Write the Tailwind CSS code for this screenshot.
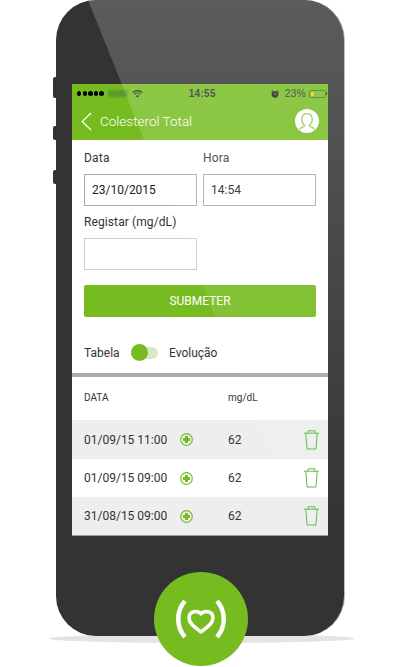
<!doctype html>
<html>
<head>
    <meta charset="UTF-8">
    <meta name="viewport" content="width=device-width, initial-scale=1.0">
    <script src="https://cdn.jsdelivr.net/npm/@tailwindcss/browser@4"></script>
</head>
<body class="bg-white font-['Roboto',sans-serif]">

<div class="relative w-[400px] h-[667px] overflow-hidden">
    <!-- shadow under the phone -->
    <div class="absolute left-[49px] top-[634px] w-[306px] h-[9px] rounded-[50%] bg-[#e4e4e4]"></div>

    <!-- phone -->
    <div class="relative ml-[56px] w-[288px] h-[636px] rounded-[40px] bg-[#333333] shadow-[1px_0_0_0_#bbbbbb] overflow-hidden pt-[84px] pl-[16px]">
        <div class="w-[256px] h-[452px] bg-white flex flex-col">

            <!-- green header -->
            <div class="h-[56px] bg-[#76bc21] flex flex-col shrink-0">
                <div class="h-[17px] mt-[1px] flex items-center text-[#333333] font-['Liberation_Sans',sans-serif] relative">
                    <div class="flex gap-[1.2px] ml-[5px]">
                        <span class="w-[4.4px] h-[4.4px] rounded-full bg-black"></span>
                        <span class="w-[4.4px] h-[4.4px] rounded-full bg-black"></span>
                        <span class="w-[4.4px] h-[4.4px] rounded-full bg-black"></span>
                        <span class="w-[4.4px] h-[4.4px] rounded-full bg-black"></span>
                        <span class="w-[4.4px] h-[4.4px] rounded-full bg-black"></span>
                    </div>
                    <div class="ml-[4px] w-[20px] h-[7px] bg-[#5e9a2a] blur-[1px]"></div>
                    <svg class="ml-[4px]" width="11" height="8" viewBox="0 0 11 8" fill="none" stroke="#222" stroke-width="1.1">
                        <path d="M.6 2.6a7 7 0 0 1 9.8 0"/>
                        <path d="M2.3 4.3a4.6 4.6 0 0 1 6.4 0"/>
                        <path d="M3.9 5.9a2.3 2.3 0 0 1 3.2 0L5.5 7.6z" fill="#222" stroke="none"/>
                    </svg>
                    <span class="ml-[46px] text-[10px] font-bold tracking-[.3px]">14:55</span>
                    <svg class="ml-[55px]" width="8" height="8" viewBox="0 0 8 8">
                        <circle cx="4" cy="4.3" r="3.4" fill="#222"/>
                        <path d="M.4 2 2 .5M7.6 2 6 .5" stroke="#222" stroke-width="1"/>
                        <path d="M4 2.5v2h1.4" stroke="#8dc94a" stroke-width=".7" fill="none"/>
                    </svg>
                    <span class="ml-[6px] text-[10.5px]">23%</span>
                    <div class="ml-[3px] w-[17px] h-[8px] rounded-[1.5px] border border-[#4d7a25] p-[1px] flex">
                        <div class="w-[3px] bg-[#f5c518]"></div>
                    </div>
                    <div class="w-[1.5px] h-[3px] bg-[#333333]"></div>
                </div>
                <div class="flex-1 flex items-center pl-[9px] pr-[9px]">
                    <svg width="11" height="19" viewBox="0 0 11 19" fill="none" stroke="#fff" stroke-width="1.2">
                        <path d="M10 1 1.200 9.500 10 18"/>
                    </svg>
                    <span class="ml-[8px] text-white text-[13.500px] font-light">Colesterol Total</span>
                    <svg class="ml-auto" width="24" height="24" viewBox="0 0 24 24">
                        <circle cx="12" cy="12" r="12" fill="#fff"/>
                        <path d="M4.500 20c1.500-2 4.600-2 5.300-3.600-2.100-1.600-3.100-4-3-6.400C7 7 9 4.700 12 4.700S17 7 17.200 10c.1 2.400-.9 4.800-3 6.400.7 1.600 3.800 1.600 5.300 3.600" fill="none" stroke="#8dc94a" stroke-width="1.300"/>
                    </svg>
                </div>
            </div>

            <!-- form -->
            <div class="px-[12px] pt-[11px] shrink-0">
                <div class="grid grid-cols-[113px_113px] gap-x-[6px]">
                    <div>
                        <div class="text-[12px] leading-[14px] text-[#333333] tracking-[.2px]">Data</div>
                        <div class="mt-[9px] h-[32px] border border-[#aaaaaa] pl-[7px] flex items-center text-[12px] text-[#222222]">23/10/2015</div>
                    </div>
                    <div>
                        <div class="text-[12px] leading-[14px] text-[#333333] tracking-[.2px]">Hora</div>
                        <div class="mt-[9px] h-[32px] border border-[#aaaaaa] pl-[7px] flex items-center text-[12px] text-[#222222]">14:54</div>
                    </div>
                </div>
                <div class="mt-[9px] text-[12px] leading-[14px] text-[#333333] tracking-[.1px]">Registar (mg/dL)</div>
                <div class="mt-[9px] w-[113px] h-[32px] border border-[#cccccc]"></div>
                <div class="mt-[15px] h-[32px] rounded-[2px] bg-[#76bc21] flex items-center justify-center text-white text-[12px]">SUBMETER</div>
                <div class="mt-[27px] h-[18px] flex items-center text-[12px] text-[#333333]">
                    <span class="w-[36px]">Tabela</span>
                    <div class="relative ml-[11px] w-[27px] h-[12px] rounded-full bg-[#d6ebbf]">
                        <div class="absolute left-0 top-[-3px] w-[17px] h-[17px] rounded-full bg-[#76bc21]"></div>
                    </div>
                    <span class="ml-[11px]">Evolução</span>
                </div>
            </div>

            <div class="mt-[11px] h-[4px] bg-[#aaaaaa] shrink-0"></div>

            <!-- table -->
            <div class="h-[43px] pb-[2px] pl-[12px] grid grid-cols-[144px_1fr] items-center text-[10px] text-[#333333] shrink-0">
                <span>DATA</span>
                <span>mg/dL</span>
            </div>
            <div class="h-[39px] bg-[#eeeeee] pl-[12px] pr-[9px] grid grid-cols-[96px_48px_1fr_15px] items-center text-[12px] text-[#333333] shrink-0">
                <span>01/09/15 11:00</span>
                <svg width="13" height="13" viewBox="0 0 13 13"><circle cx="6.500" cy="6.500" r="5.800" fill="none" stroke="#76bc21" stroke-width="1.200"/><path d="M5 3h3v2h2v3H8v2H5V8H3V5h2z" fill="#76bc21"/></svg>
                <span>62</span>
                <svg width="15" height="20" viewBox="0 0 15 20" fill="none" stroke="#5cbd48" stroke-width="1"><path d="M0 3.200h15M4 3.200V.8h7v2.400M1.800 3.200l1.200 15.800h9l1.200-15.800"/></svg>
            </div>
            <div class="h-[38px] bg-white pl-[12px] pr-[9px] grid grid-cols-[96px_48px_1fr_15px] items-center text-[12px] text-[#333333] shrink-0">
                <span>01/09/15 09:00</span>
                <svg width="13" height="13" viewBox="0 0 13 13"><circle cx="6.500" cy="6.500" r="5.800" fill="none" stroke="#76bc21" stroke-width="1.200"/><path d="M5 3h3v2h2v3H8v2H5V8H3V5h2z" fill="#76bc21"/></svg>
                <span>62</span>
                <svg width="15" height="20" viewBox="0 0 15 20" fill="none" stroke="#5cbd48" stroke-width="1"><path d="M0 3.200h15M4 3.200V.8h7v2.400M1.800 3.200l1.200 15.800h9l1.200-15.800"/></svg>
            </div>
            <div class="h-[38px] bg-[#eeeeee] pl-[12px] pr-[9px] grid grid-cols-[96px_48px_1fr_15px] items-center text-[12px] text-[#333333] shrink-0">
                <span>31/08/15 09:00</span>
                <svg width="13" height="13" viewBox="0 0 13 13"><circle cx="6.500" cy="6.500" r="5.800" fill="none" stroke="#76bc21" stroke-width="1.200"/><path d="M5 3h3v2h2v3H8v2H5V8H3V5h2z" fill="#76bc21"/></svg>
                <span>62</span>
                <svg width="15" height="20" viewBox="0 0 15 20" fill="none" stroke="#5cbd48" stroke-width="1"><path d="M0 3.200h15M4 3.200V.8h7v2.400M1.800 3.200l1.200 15.800h9l1.200-15.800"/></svg>
            </div>
            <div class="h-px bg-[#999999] shrink-0"></div>
        </div>

        <!-- glass reflection -->
        <div class="absolute inset-0 pointer-events-none bg-linear-to-b from-white/20 to-transparent to-85% [clip-path:polygon(32px_0,288px_0,288px_636px,287px_636px)]"></div>
    </div>

    <!-- side buttons -->
    <div class="absolute left-[53px] top-[77px] w-[4px] h-[21px] rounded-l-[2px] bg-[#333333]"></div>
    <div class="absolute left-[53px] top-[126px] w-[4px] h-[14px] rounded-l-[2px] bg-[#333333]"></div>
    <div class="absolute left-[53px] top-[170px] w-[4px] h-[14px] rounded-l-[2px] bg-[#333333]"></div>

    <!-- home button -->
    <div class="absolute left-[154px] top-[572px] w-[94px] h-[94px] rounded-full bg-[#76bc21] flex items-center justify-center">
        <svg width="50" height="40" viewBox="0 0 50 40" fill="none" stroke="#fff">
            <path d="M9 2C0 12 0 28 9 38" stroke-width="4.500"/>
            <path d="M41 2c9 10 9 26 0 36" stroke-width="4.500"/>
            <path d="M25 15c-3-4-12-3.500-12 4 0 6 7 10 12 14 5-4 12-8 12-14 0-7.500-9-8-12-4z" stroke-width="3.500" stroke-linejoin="round"/>
        </svg>
    </div>
</div>

</body>
</html>
